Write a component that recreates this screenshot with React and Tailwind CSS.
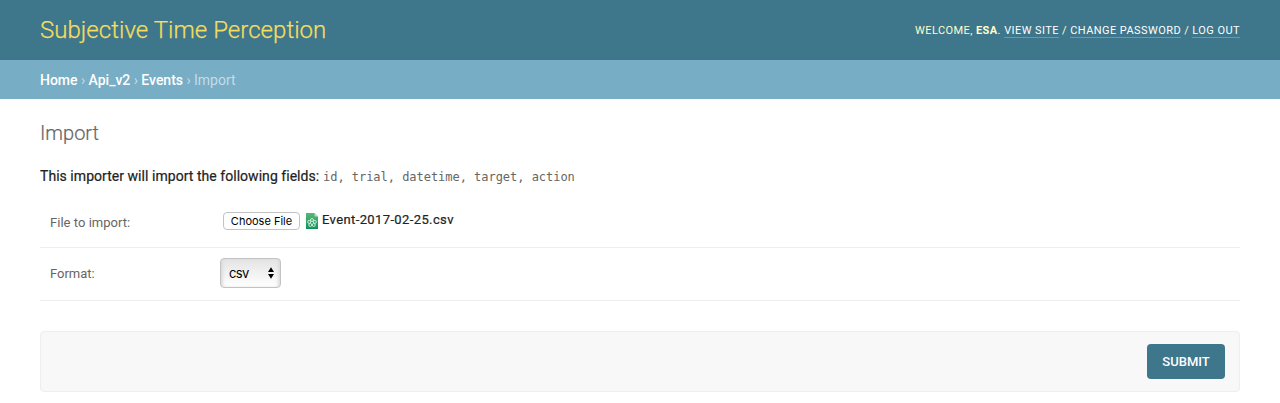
function Header() {
  return (
    <header className="flex h-[60px] items-center justify-between bg-[#3e768c] px-10">
      <h1 className="text-[24px] leading-6 font-light tracking-[0.04px] text-[#f5dd5d] [-webkit-text-stroke:0.25px_#f5dd5d]">Subjective Time Perception</h1>
      <div className="pt-px text-[11px] leading-[14px] tracking-[0.43px] whitespace-nowrap text-[#ffffcc] uppercase">
        Welcome, <strong className="font-bold">esa</strong>.{' '}
        <a className="border-b border-white/25 text-white">View site</a> /{' '}
        <a className="border-b border-white/25 text-white">Change password</a> /{' '}
        <a className="border-b border-white/25 text-white">Log out</a>
      </div>
    </header>
  );
}

function Breadcrumbs() {
  return (
    <nav className="h-[39px] bg-[#77adc5] px-10 pt-3 text-[14px] leading-4 tracking-[-0.02px] text-[#c4dce8]">
      <a className="font-medium text-white">Home</a> › <a className="font-medium text-white">Api_v2</a> ›{' '}
      <a className="font-medium text-white">Events</a> › Import
    </nav>
  );
}

function CsvIcon() {
  return (
    <svg width="12" height="16" viewBox="0 0 12 16" className="ml-[6px] shrink-0">
      <defs>
        <linearGradient id="sheet" x1="0" y1="0" x2="0" y2="1">
          <stop offset="0" stopColor="#57b877" />
          <stop offset="1" stopColor="#12925c" />
        </linearGradient>
      </defs>
      <path d="M0 0h8.5L12 3.5V16H0z" fill="url(#sheet)" />
      <path d="M8.5 0L12 3.5H8.5z" fill="#b5e0c3" />
      <g fill="none" stroke="#d9f3e3" strokeWidth="0.9">
        <circle cx="6" cy="7" r="1.5" />
        <circle cx="3.2" cy="8.9" r="1.5" />
        <circle cx="8.8" cy="8.9" r="1.5" />
        <circle cx="4.3" cy="12" r="1.5" />
        <circle cx="7.7" cy="12" r="1.5" />
      </g>
    </svg>
  );
}

export default function App() {
  return (
    <div className="h-[403px] overflow-hidden bg-white font-['Roboto',sans-serif] text-[#333]">
      <Header />
      <Breadcrumbs />
      <main className="px-10 pt-[21px]">
        <h2 className="text-[20px] leading-[26px] font-light text-[#666] [-webkit-text-stroke:0.2px_#666]">Import</h2>
        <p className="mt-[20px] flex h-5 items-center text-[14px] leading-5 whitespace-nowrap">
          <span className="w-[283px] tracking-[0.04px] text-[#222] [-webkit-text-stroke:0.2px_#222]">This importer will import the following fields:</span>
          <code className="pt-px font-['DejaVu_Sans_Mono',monospace] text-[12px] tracking-[-0.03px] text-[#666]">
            id, trial, datetime, target, action
          </code>
        </p>
        <div className="mt-[11px] flex h-[51px] border-b border-[#eee] pl-[10px] text-[13px]">
          <label className="w-[170px] pt-4 leading-5 tracking-[0.03px] text-[#666]">File to import:</label>
          <div className="mt-[15px] flex h-[18px] items-center pl-[3px]">
            <button className="h-[18px] w-[77px] rounded-[4px] border border-[#c3c3c3] bg-white font-['Inter',sans-serif] text-[11px] leading-4 text-black">
              Choose File
            </button>
            <CsvIcon />
            <span className="relative -top-px ml-[4px] leading-4 tracking-[0.38px] text-[#222] [-webkit-text-stroke:0.2px_#222]">Event-2017-02-25.csv</span>
          </div>
        </div>
        <div className="flex h-[53px] border-b border-[#eee] pt-[10px] pl-[10px] text-[13px]">
          <label className="w-[170px] pt-[6px] leading-5 text-[#666]">Format:</label>
          <div className="flex h-[30px] w-[61px] items-center justify-between rounded-[4px] border border-[#c3c3c3] bg-linear-to-b from-[#e4e4e4] to-white pr-[6px] pl-2 text-black shadow-[inset_3px_0_3px_-1px_#dcdcdc,inset_-3px_0_3px_-1px_#dcdcdc]">
            <span className="pt-px font-['Inter',sans-serif] text-[13px] tracking-[-0.6px]">csv</span>
            <svg width="6" height="12" viewBox="0 0 6 12">
              <path d="M0 5L3 0.2L6 5zM0 7h6L3 11.8z" fill="#000" />
            </svg>
          </div>
        </div>
        <div className="mt-[30px] flex h-[61px] justify-end rounded-[4px] border border-[#eee] bg-[#f8f8f8] pt-3 pr-[14px]">
          <button className="h-[35px] w-[78px] rounded-[4px] bg-[#3e768c] text-[13px] leading-[35px] font-medium text-white">
            SUBMIT
          </button>
        </div>
      </main>
    </div>
  );
}
